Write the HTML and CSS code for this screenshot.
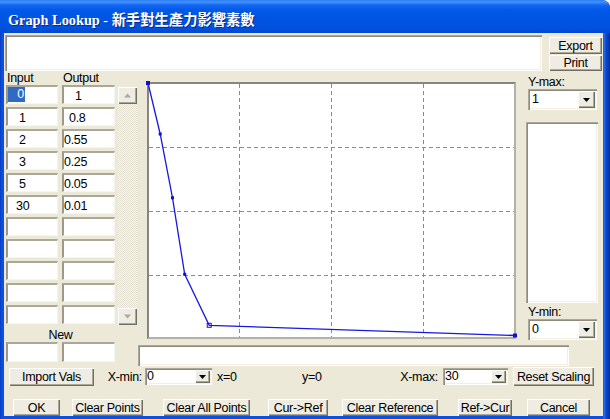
FILE: index.html
```html
<!DOCTYPE html>
<html>
<head>
<meta charset="utf-8">
<title>Graph Lookup</title>
<link rel="stylesheet" href="styles.css">
</head>
<body>
<div class="window">
  <div class="titlebar"><span class="title">Graph Lookup - 新手對生產力影響素數</span></div>
  <div class="client">
    <div class="top">
      <div class="sunken topfield"></div>
      <div class="topbtns">
        <div class="btn export">Export</div>
        <div class="btn print">Print</div>
      </div>
    </div>

    <div class="middle">
      <div class="leftcol">
        <div class="heads"><span class="h-in">Input</span><span>Output</span></div>
        <div class="tablewrap">
          <div class="cells">
            <div class="cell"><span class="sel">0</span></div><div class="cell p11">1</div>
            <div class="cell p11">1</div><div class="cell p5">0.8</div>
            <div class="cell p11">2</div><div class="cell">0.55</div>
            <div class="cell p11">3</div><div class="cell">0.25</div>
            <div class="cell p11">5</div><div class="cell">0.05</div>
            <div class="cell p8">30</div><div class="cell">0.01</div>
            <div class="cell"></div><div class="cell"></div>
            <div class="cell"></div><div class="cell"></div>
            <div class="cell"></div><div class="cell"></div>
            <div class="cell"></div><div class="cell"></div>
            <div class="cell"></div><div class="cell"></div>
          </div>
          <div class="vscroll">
            <div class="btn sbtn"><svg width="7" height="5" viewBox="0 0 7 5"><path d="M3.5 0.5L7 4.5H0z" fill="#ACA899"/></svg></div>
            <div class="track"></div>
            <div class="btn sbtn"><svg width="7" height="5" viewBox="0 0 7 5"><path d="M0 0.5H7L3.5 4.5z" fill="#ACA899"/></svg></div>
          </div>
        </div>
        <div class="newlabel">New</div>
        <div class="newrow"><div class="cell"></div><div class="cell"></div></div>
      </div>

      <div class="rightpart">
        <div class="upper">
          <div class="graph">
            <svg class="plot" width="365" height="253" viewBox="0 0 365 253">
              <g stroke="#8a8a8a" stroke-width="1" stroke-dasharray="4 3" fill="none">
                <line x1="90.5" y1="0" x2="90.5" y2="253"/>
                <line x1="182.5" y1="0" x2="182.5" y2="253"/>
                <line x1="274.5" y1="0" x2="274.5" y2="253"/>
                <line x1="0" y1="63.5" x2="365" y2="63.5"/>
                <line x1="0" y1="127.5" x2="365" y2="127.5"/>
                <line x1="0" y1="191.5" x2="365" y2="191.5"/>
              </g>
              <polyline points="-1,-1 11.2,50 23.5,113.8 35.7,190.3 60.2,241.3 366,251.5" fill="none" stroke="#1818e6" stroke-width="1.3"/>
              <g fill="#1010d0">
                <rect x="-3" y="-3" width="4" height="4"/>
                <rect x="9.7" y="48.5" width="3" height="3"/>
                <rect x="22" y="112.3" width="3" height="3"/>
                <rect x="34.2" y="188.8" width="3" height="3"/>
                <rect x="364" y="249.5" width="4" height="4"/>
              </g>
              <rect x="58.2" y="239.3" width="4" height="4" fill="none" stroke="#1010d0" stroke-width="1"/>
            </svg>
          </div>
          <div class="rpanel">
            <div class="lbl">Y-max:</div>
            <div class="sunken combo big">
              <div class="cval">1</div>
              <div class="btn cbtn"><svg width="7" height="4" viewBox="0 0 7 4"><path d="M0 0H7L3.5 4z" fill="#000"/></svg></div>
            </div>
            <div class="sunken listbox"></div>
            <div class="lbl ymin">Y-min:</div>
            <div class="sunken combo big">
              <div class="cval">0</div>
              <div class="btn cbtn"><svg width="7" height="4" viewBox="0 0 7 4"><path d="M0 0H7L3.5 4z" fill="#000"/></svg></div>
            </div>
          </div>
        </div>
        <div class="sunken statusfield"></div>
      </div>
    </div>

    <div class="scalerow">
      <div class="btn importbtn">Import Vals</div>
      <div class="slabel xminlbl">X-min:</div>
      <div class="sunken combo small xmin">
        <div class="cval">0</div>
        <div class="btn cbtn"><svg width="7" height="4" viewBox="0 0 7 4"><path d="M0 0H7L3.5 4z" fill="#000"/></svg></div>
      </div>
      <div class="xeq">x=0</div>
      <div class="yeq">y=0</div>
      <div class="slabel xmaxlbl">X-max:</div>
      <div class="sunken combo small xmax">
        <div class="cval">30</div>
        <div class="btn cbtn"><svg width="7" height="4" viewBox="0 0 7 4"><path d="M0 0H7L3.5 4z" fill="#000"/></svg></div>
      </div>
      <div class="btn resetbtn">Reset Scaling</div>
    </div>

    <div class="btnrow">
      <div class="btn b-ok">OK</div>
      <div class="btn b-cp">Clear Points</div>
      <div class="btn b-cap">Clear All Points</div>
      <div class="btn b-cr">Cur-&gt;Ref</div>
      <div class="btn b-clr">Clear Reference</div>
      <div class="btn b-rc">Ref-&gt;Cur</div>
      <div class="btn b-cancel">Cancel</div>
    </div>
  </div>
</div>
</body>
</html>
```

FILE: styles.css
```css
* { box-sizing: border-box; }

body {
  margin: 0;
  width: 610px;
  height: 419px;
  overflow: hidden;
  background: #f2f2f2;
  font-family: "Liberation Sans", Arial, sans-serif;
  font-size: 12.5px;
  letter-spacing: -0.3px;
  color: #000;
}

.window {
  width: 610px;
  height: 419px;
  display: flex;
  flex-direction: column;
  background: linear-gradient(to right, #0637B8 0, #0A4AD8 1px, #0B50E2 3px, #0B50E2 603px, #2E6FEE 604px, #0A48D2 606px, #0536AE 609px, #032A8C 610px);
  border-top-right-radius: 8px;
  overflow: hidden;
}

.titlebar {
  height: 33px;
  flex: none;
  display: flex;
  align-items: center;
  padding: 4px 0 0 8px;
  background: linear-gradient(to bottom, #2C7CF4 0, #4392FF 2px, #1467F0 5px, #0059E9 10px, #0055E3 55%, #0051DD 85%, #0048D0 100%);
}

.title {
  color: #fff;
  font-weight: bold;
  font-size: 14.3px;
  letter-spacing: 0;
  font-family: "Liberation Serif", "Noto Sans CJK TC", serif;
  text-shadow: 1px 1px 0 #0A2A8A;
  white-space: nowrap;
}

.client {
  flex: 1;
  margin: 0 7px 3px 4px;
  background: #ECE9D8;
  display: flex;
  flex-direction: column;
  white-space: nowrap;
}

/* generic controls */
.btn {
  background: #EFEDE3;
  box-shadow: inset 1px 1px #fff, inset -1px -1px #716F64, inset -2px -2px #ACA899;
  display: flex;
  align-items: center;
  justify-content: center;
  white-space: nowrap;
  flex: none;
}

.sunken {
  background: #fff;
  box-shadow: inset 1px 1px #ACA899, inset 2px 2px #8E8B7E, inset -1px -1px #fff, inset -2px -2px #F1EFE2;
  flex: none;
}

/* top section */
.top { display: flex; height: 39px; flex: none; }
.topfield { margin: 2px 0 0 1px; width: 537px; height: 36px; }
.topbtns { margin-left: 7px; width: 53px; display: flex; flex-direction: column; }
.export { margin-top: 4px; height: 17px; }
.print { margin-top: 1px; height: 16px; }

/* middle */
.middle { display: flex; height: 294px; flex: none; }

.leftcol { margin-left: 2px; width: 132px; display: flex; flex-direction: column; flex: none; }
.heads { height: 13px; line-height: 13px; display: flex; padding-left: 1px; }
.h-in { width: 56px; }

.tablewrap { display: flex; height: 240px; }
.cells {
  display: grid;
  grid-template-columns: 52px 53px;
  grid-auto-rows: 19px;
  column-gap: 4px;
  row-gap: 3px;
  align-content: start;
}
.cell {
  background: #fff;
  border-top: 2px solid #ACA899;
  border-left: 2px solid #9D9A8C;
  border-right: 1px solid #F6F5EF;
  border-bottom: 1px solid #F6F5EF;
  padding-top: 1px;
  line-height: 17px;
  overflow: hidden;
  white-space: nowrap;
}
.p5 { padding-left: 5px; }
.p8 { padding-left: 8px; }
.p11 { padding-left: 11px; }
.sel {
  display: inline-block;
  width: 17px;
  height: 15px;
  line-height: 15px;
  margin-top: -1px;
  text-align: right;
  padding-right: 1px;
  background: #316AC5;
  color: #fff;
  vertical-align: top;
}

.vscroll { margin: 2px 0 0 3px; width: 19px; height: 238px; display: flex; flex-direction: column; }
.sbtn { height: 17px; }
.sbtn svg { display: block; }
.track {
  flex: 1;
  background: repeating-conic-gradient(#F8F7F2 0% 25%, #E3E0D2 0% 50%) 0 0 / 2px 2px;
}

.newlabel { height: 17px; padding-top: 3px; line-height: 14px; width: 109px; text-align: center; }
.newrow { display: grid; grid-template-columns: 52px 53px; column-gap: 4px; height: 20px; }

.rightpart { display: flex; flex-direction: column; }
.upper { display: flex; height: 268px; flex: none; }

.graph {
  margin: 10px 0 0 9px;
  width: 369px;
  height: 257px;
  border: 2px solid;
  border-color: #86857F #B3B1A8 #B3B1A8 #86857F;
  background: #fff;
  flex: none;
}
.plot { display: block; overflow: visible; }

.rpanel { margin-left: 10px; width: 72px; display: flex; flex-direction: column; flex: none; }
.lbl { margin: 4px 0 0 2px; height: 13px; line-height: 13px; }
.lbl.ymin { margin-top: 2px; height: 14px; line-height: 14px; }

.combo { display: flex; padding: 2px; }
.combo.big { margin-left: 2px; width: 69px; height: 21px; }
.cval { flex: 1; padding-left: 2px; line-height: 17px; }
.combo.big .cbtn { width: 17px; }
.combo.small { height: 17px; }
.combo.small .cval { line-height: 13px; padding-left: 0; }
.combo.small .cbtn { width: 15px; }
.cbtn svg { display: block; }

.listbox { margin-top: 12px; height: 181px; }
.statusfield { margin-top: 5px; width: 431px; height: 21px; }

/* scaling row */
.scalerow { display: flex; align-items: center; height: 21px; flex: none; }
.importbtn { margin-left: 5px; width: 85px; height: 18px; }
.slabel { text-align: right; flex: none; }
.xminlbl { width: 49px; padding-right: 1px; }
.xmin { margin-left: 2px; width: 67px; }
.xeq { margin-left: 5px; width: 85px; flex: none; }
.yeq { width: 98px; flex: none; }
.xmaxlbl { width: 41px; padding-right: 3px; }
.xmax { margin-left: 2px; width: 65px; }
.resetbtn { margin-left: 5px; width: 81px; height: 19px; }

/* bottom buttons */
.btnrow { display: flex; margin-top: 12px; height: 17px; flex: none; }
.btnrow .btn { height: 17px; padding-top: 1px; }
.b-ok { margin-left: 9px; width: 47px; }
.b-cp { margin-left: 12px; width: 71px; }
.b-cap { margin-left: 20px; width: 87px; }
.b-cr { margin-left: 18px; width: 60px; }
.b-clr { margin-left: 14px; width: 96px; }
.b-rc { margin-left: 20px; width: 54px; }
.b-cancel { margin-left: 15px; width: 63px; }
```
